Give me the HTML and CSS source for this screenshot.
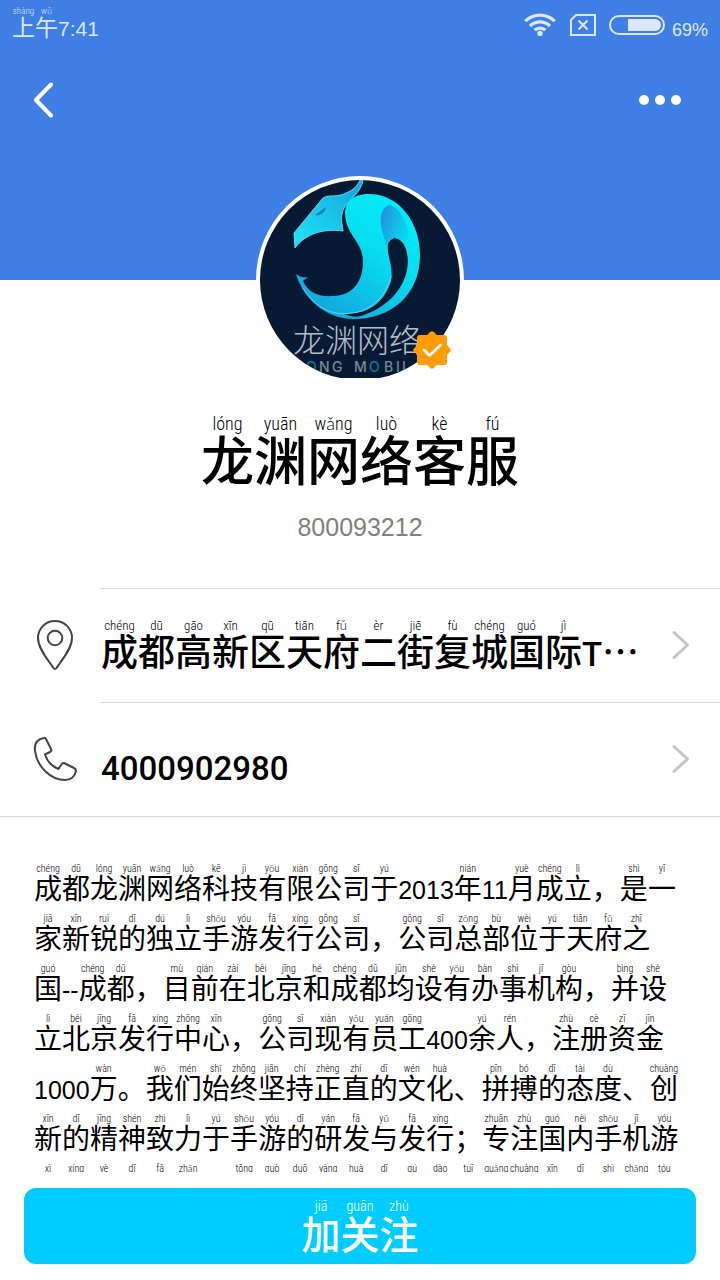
FILE: index.html
```html
<!DOCTYPE html>
<html lang="zh-CN">
<head>
<meta charset="utf-8">
<meta name="viewport" content="width=device-width, initial-scale=1">
<title>龙渊网络客服</title>
<link rel="stylesheet" href="styles.css">
</head>
<body>
<header class="banner">
  <div class="status">
    <span class="clock"><ruby>上<rt>shàng</rt>午<rt>wǔ</rt></ruby><span class="num">7:41</span></span>
    <span class="indicators">
      <svg width="34" height="26" viewBox="0 0 34 26" fill="none" stroke="#dbe7fa" stroke-width="3.2" aria-hidden="true"><path d="M2.2 9.200a21 21 0 0 1 29.6 0M7 14a14.2 14.2 0 0 1 20 0M11.6 18.200a7.8 7.8 0 0 1 10.8 0"/><circle cx="17" cy="21.4" r="2.7" fill="#dbe7fa" stroke="none"/></svg>
      <svg width="26" height="22" viewBox="0 0 26 22" fill="none" stroke="#dbe7fa" stroke-width="2" aria-hidden="true"><path d="M6 1H25V21H1V6Z M8.500 6.500l9 9M17.500 6.500l-9 9"/></svg>
      <svg width="56" height="20" viewBox="0 0 56 20" aria-hidden="true"><rect x="1" y="1" width="54" height="18" rx="9" fill="none" stroke="#dbe7fa" stroke-width="2"/><path d="M19 4H46a6 6 0 0 1 0 12H19Z" fill="#dbe7fa"/></svg>
      <span class="percent">69%</span>
    </span>
  </div>
  <nav class="toolbar">
    <button class="icon-button" type="button" aria-label="返回"><svg width="20" height="36" viewBox="0 0 20 36" fill="none" stroke="#fff" stroke-width="4" stroke-linecap="round" stroke-linejoin="round"><path d="M18 2.500L3 18l15 15.500"/></svg></button>
    <button class="icon-button" type="button" aria-label="更多"><svg width="42" height="10" viewBox="0 0 42 10" fill="#fff"><circle cx="5" cy="5" r="5"/><circle cx="21" cy="5" r="5"/><circle cx="37" cy="5" r="5"/></svg></button>
  </nav>
</header>

<section class="profile">
  <div class="avatar">
    <svg class="portrait" viewBox="0 0 200 200" role="img" aria-label="龙渊网络">
      <defs>
        <clipPath id="frame"><path d="M0 0H200V198H0Z"/></clipPath>
        <linearGradient id="body" x1="1" y1="0" x2="0.300" y2="1"><stop offset="0" stop-color="#00f0f8"/><stop offset="0.450" stop-color="#08dff0"/><stop offset="1" stop-color="#12a7dc"/></linearGradient>
        <linearGradient id="head" x1="1" y1="0" x2="0" y2="1"><stop offset="0" stop-color="#14a4df"/><stop offset="1" stop-color="#20e4f4"/></linearGradient>
        <linearGradient id="fold" x1="0" y1="0" x2="1" y2="0.500"><stop offset="0" stop-color="#258bdc"/><stop offset="1" stop-color="#06def2"/></linearGradient>
      </defs>
      <g clip-path="url(#frame)">
        <rect width="200" height="200" fill="#061a33"/>
        <path d="M34 53L63 18C70 14 77 18 86 13C94 10 98 5 100 0H103C101 12 91 18 84 28C80 36 82 43 83 51C64 48 45 54 35 68Z" fill="url(#head)" stroke="#61d9ec" stroke-width="1"/>
        <path d="M55 35l11-8c-1 5-5 9-11 8Z" fill="#147fb9"/>
        <path d="M85 34C85 20 95 14 109 14C139 14 160 42 160 75C160 116 130 139 94 139C65 139 43 118 36 94C40 97 43 98 48 97L43 101C48 112 57 117 73 116C92 116 103 102 103 82C103 61 86 56 85 34Z" fill="url(#body)"/>
        <path d="M124 57C119 44 119 29 129 25C143 28 152 50 149 77C147 64 142 58 136 58C130 58 127 62 126 66Z" fill="url(#fold)"/>
        <path d="M128 64C130 58 137 55 143 63C155 82 146 122 101 136Q93 138 84 134C113 134 125 119 131 101C134 87 126 74 128 64Z" fill="#061a33"/>
        <path d="M43 108C56 129 74 136 91 133C112 132 127 114 131 96" fill="none" stroke="#58dbed" stroke-width="1"/>
        <text class="logo-name" x="33" y="172">龙渊网络</text>
        <text class="logo-sub" y="192"><tspan x="46" fill="#087a9b">O</tspan><tspan x="59">N</tspan><tspan x="72">G</tspan><tspan x="94">M</tspan><tspan x="109" fill="#087a9b">O</tspan><tspan x="124">B</tspan><tspan x="136">I</tspan><tspan x="142">L</tspan></text>
      </g>
    </svg>
    <svg class="badge" viewBox="0 0 40 40" role="img" aria-label="已认证"><g fill="#ff9c08"><rect x="5" y="5" width="30" height="30" rx="3"/><rect x="6" y="6" width="28" height="28" rx="3" transform="rotate(45 20 20)"/></g><path d="M12 20l5.500 5.500L28.500 15" fill="none" stroke="#fff" stroke-width="2.600" stroke-linecap="round" stroke-linejoin="round"/></svg>
  </div>
  <h1 class="name"><ruby>龙<rt>lóng</rt>渊<rt>yuān</rt>网<rt>wǎng</rt>络<rt>luò</rt>客<rt>kè</rt>服<rt>fú</rt></ruby></h1>
  <p class="account">800093212</p>
</section>

<section class="contacts">
  <a class="contact" href="#address">
    <svg class="contact-icon" viewBox="0 0 44 50" fill="none" stroke="#444" stroke-width="2" stroke-linejoin="round" aria-hidden="true"><path d="M22 1C12 1 5 9 5 18c0 11 11 23 15.500 30q1.500 2 3 0C28 41 39 29 39 18 39 9 32 1 22 1Z"/><circle cx="22" cy="18" r="7.300"/></svg>
    <span class="contact-text"><ruby>成<rt>chéng</rt>都<rt>dū</rt>高<rt>gāo</rt>新<rt>xīn</rt>区<rt>qū</rt>天<rt>tiān</rt>府<rt>fǔ</rt>二<rt>èr</rt>街<rt>jiē</rt>复<rt>fù</rt>城<rt>chéng</rt>国<rt>guó</rt>际<rt>jì</rt></ruby><span class="num">T</span>…</span>
    <svg class="chevron" viewBox="0 0 18 30" fill="none" stroke="#c4c4c4" stroke-width="3" stroke-linecap="round" stroke-linejoin="round" aria-hidden="true"><path d="M2 2.500L15.500 15 2 27.500"/></svg>
  </a>
  <a class="contact" href="tel:4000902980">
    <svg class="contact-icon" viewBox="0 0 44 50" fill="none" stroke="#444" stroke-width="2" stroke-linejoin="round" aria-hidden="true"><path d="M11 4C5 5 1 9 2 17C4 33 18 46 32 46C38 46 42 42 43 37Q43 35 41 34L31 29Q29 29 28 31L25.500 35C18 32 14 27 12 20.500L17 18Q19 17 18 15L13 5Q12 3.500 11 4Z"/></svg>
    <span class="contact-text"><span class="num">4000902980</span></span>
    <svg class="chevron" viewBox="0 0 18 30" fill="none" stroke="#c4c4c4" stroke-width="3" stroke-linecap="round" stroke-linejoin="round" aria-hidden="true"><path d="M2 2.500L15.500 15 2 27.500"/></svg>
  </a>
</section>

<main class="about">
  <p class="intro"><ruby>成<rt>chéng</rt>都<rt>dū</rt>龙<rt>lóng</rt>渊<rt>yuān</rt>网<rt>wǎng</rt>络<rt>luò</rt>科<rt>kē</rt>技<rt>jì</rt>有<rt>yǒu</rt>限<rt>xiàn</rt>公<rt>gōng</rt>司<rt>sī</rt>于<rt>yú</rt></ruby><span class="num">2013</span><ruby>年<rt>nián</rt></ruby><span class="num">11</span><ruby>月<rt>yuè</rt>成<rt>chéng</rt>立<rt>lì</rt></ruby>，<ruby>是<rt>shì</rt>一<rt>yī</rt></ruby><br>
  <ruby>家<rt>jiā</rt>新<rt>xīn</rt>锐<rt>ruì</rt>的<rt>dī</rt>独<rt>dú</rt>立<rt>lì</rt>手<rt>shǒu</rt>游<rt>yóu</rt>发<rt>fā</rt>行<rt>xíng</rt>公<rt>gōng</rt>司<rt>sī</rt></ruby>，<ruby>公<rt>gōng</rt>司<rt>sī</rt>总<rt>zǒng</rt>部<rt>bù</rt>位<rt>wèi</rt>于<rt>yú</rt>天<rt>tiān</rt>府<rt>fǔ</rt>之<rt>zhī</rt></ruby><br>
  <ruby>国<rt>guó</rt></ruby><span class="num">--</span><ruby>成<rt>chéng</rt>都<rt>dū</rt></ruby>，<ruby>目<rt>mù</rt>前<rt>qián</rt>在<rt>zài</rt>北<rt>běi</rt>京<rt>jīng</rt>和<rt>hé</rt>成<rt>chéng</rt>都<rt>dū</rt>均<rt>jūn</rt>设<rt>shè</rt>有<rt>yǒu</rt>办<rt>bàn</rt>事<rt>shì</rt>机<rt>jī</rt>构<rt>gòu</rt></ruby>，<ruby>并<rt>bìng</rt>设<rt>shè</rt></ruby><br>
  <ruby>立<rt>lì</rt>北<rt>běi</rt>京<rt>jīng</rt>发<rt>fā</rt>行<rt>xíng</rt>中<rt>zhōng</rt>心<rt>xīn</rt></ruby>，<ruby>公<rt>gōng</rt>司<rt>sī</rt>现<rt>xiàn</rt>有<rt>yǒu</rt>员<rt>yuán</rt>工<rt>gōng</rt></ruby><span class="num">400</span><ruby>余<rt>yú</rt>人<rt>rén</rt></ruby>，<ruby>注<rt>zhù</rt>册<rt>cè</rt>资<rt>zī</rt>金<rt>jīn</rt></ruby><br>
  <span class="num">1000</span><ruby>万<rt>wàn</rt></ruby>。<ruby>我<rt>wǒ</rt>们<rt>mén</rt>始<rt>shǐ</rt>终<rt>zhōng</rt>坚<rt>jiān</rt>持<rt>chí</rt>正<rt>zhèng</rt>直<rt>zhí</rt>的<rt>dī</rt>文<rt>wén</rt>化<rt>huà</rt></ruby>、<ruby>拼<rt>pīn</rt>搏<rt>bó</rt>的<rt>dī</rt>态<rt>tài</rt>度<rt>dù</rt></ruby>、<ruby>创<rt>chuàng</rt></ruby><br>
  <ruby>新<rt>xīn</rt>的<rt>dī</rt>精<rt>jīng</rt>神<rt>shén</rt>致<rt>zhì</rt>力<rt>lì</rt>于<rt>yú</rt>手<rt>shǒu</rt>游<rt>yóu</rt>的<rt>dī</rt>研<rt>yán</rt>发<rt>fā</rt>与<rt>yǔ</rt>发<rt>fā</rt>行<rt>xíng</rt></ruby>；<ruby>专<rt>zhuān</rt>注<rt>zhù</rt>国<rt>guó</rt>内<rt>nèi</rt>手<rt>shǒu</rt>机<rt>jī</rt>游<rt>yóu</rt></ruby><br>
  <ruby>戏<rt>xì</rt>行<rt>xíng</rt>业<rt>yè</rt>的<rt>dī</rt>发<rt>fā</rt>展<rt>zhǎn</rt></ruby>，<ruby>通<rt>tōng</rt>过<rt>guò</rt>多<rt>duō</rt>样<rt>yàng</rt>化<rt>huà</rt>的<rt>dī</rt>渠<rt>qú</rt>道<rt>dào</rt>推<rt>tuī</rt>广<rt>guǎng</rt>创<rt>chuàng</rt>新<rt>xīn</rt>的<rt>dī</rt>市<rt>shì</rt>场<rt>chǎng</rt>投<rt>tóu</rt></ruby></p>
</main>

<footer class="actions">
  <button class="follow" type="button"><ruby>加<rt>jiā</rt>关<rt>guān</rt>注<rt>zhù</rt></ruby></button>
</footer>
</body>
</html>
```

FILE: styles.css
```css
* { box-sizing: border-box; }

body {
  margin: 0;
  height: 100vh;
  display: flex;
  flex-direction: column;
  background: #fff;
  color: #000;
  font-family: "Liberation Sans", "Noto Sans CJK SC", sans-serif;
}

/* Each reading is a zero-width box centred over the character before it.
   --cell is the character width, --lift the rise above its baseline. */
ruby {
  display: inline;
  font-family: "Noto Sans CJK SC", sans-serif;
  white-space: nowrap;
}

rt {
  display: inline-flex;
  justify-content: center;
  width: 0;
  margin-left: calc(var(--cell) / -2);
  margin-right: calc(var(--cell) / 2);
  vertical-align: var(--lift);
  font-family: "Roboto Condensed", Lato, sans-serif;
  font-weight: 300;
  line-height: 0;
  white-space: nowrap;
}

.num {
  font-family: "Liberation Sans", sans-serif;
  line-height: 1;
}

.banner {
  flex: none;
  height: 280px;
  background: #3f7fe3;
  color: #dbe7fa;
}

.status {
  height: 50px;
  padding: 0 12px;
  display: flex;
  justify-content: space-between;
}

.clock {
  --cell: 23px;
  --lift: 22px;
  font-family: "Noto Sans CJK SC", sans-serif;
  font-size: 23px;
  line-height: 52px;
}

.clock rt { font-size: 9px; }
.clock .num { font-size: 21px; }

.indicators {
  display: flex;
  align-items: center;
  gap: 13px;
}

.percent {
  margin-left: -6px;
  padding-top: 10px;
  font-size: 18px;
}

.toolbar {
  height: 100px;
  padding: 0 27px 0 29px;
  display: flex;
  align-items: center;
  justify-content: space-between;
}

.icon-button {
  padding: 4px;
  border: 0;
  background: none;
  display: flex;
}

.toolbar .icon-button:last-child { padding: 12px; }

.profile {
  flex: none;
  margin-top: -104px;
  display: flex;
  flex-direction: column;
  align-items: center;
}

.avatar {
  position: relative;
  width: 208px;
  height: 208px;
  padding: 4px;
  border-radius: 50%;
  background: #fff;
}

.portrait {
  display: block;
  width: 200px;
  height: 200px;
  border-radius: 50%;
}

.logo-name {
  font: 300 32px "Noto Sans CJK SC", sans-serif;
  fill: #b4bdc8;
}

.logo-sub {
  font: 500 14px Inter, sans-serif;
  fill: #7b8897;
}

.badge {
  position: absolute;
  right: 12px;
  bottom: 14px;
  width: 40px;
  height: 40px;
}

.name {
  --cell: 53px;
  --lift: 51px;
  margin: 24px 0 0;
  font-family: "Noto Sans CJK SC", sans-serif;
  font-size: 53px;
  font-weight: 500;
  line-height: 100px;
}

.name rt { font-size: 18px; }

.account {
  margin: 0 0 42px;
  font-size: 25px;
  line-height: 38px;
  color: #808080;
}

.contacts {
  flex: none;
  border-bottom: 1px solid #d9d9d9;
}

.contact {
  height: 114px;
  padding-left: 33px;
  display: flex;
  align-items: center;
  color: inherit;
  text-decoration: none;
  background: linear-gradient(#d9d9d9, #d9d9d9) 100px 0 / 100% 1px no-repeat;
}

.contact-icon {
  flex: none;
  width: 44px;
  height: 50px;
}

.contact-text {
  --cell: 37px;
  --lift: 36px;
  flex: 1;
  padding: 9px 0 0 24px;
  font-family: "Noto Sans CJK SC", sans-serif;
  font-size: 37px;
  font-weight: 500;
  line-height: 60px;
  white-space: nowrap;
}

.contact-text rt { font-size: 13px; }

.contact-text .num {
  font-family: Roboto, sans-serif;
  font-size: 33px;
}

.chevron {
  flex: none;
  width: 18px;
  height: 30px;
  margin-right: 30px;
}

.about {
  flex: 1;
  min-height: 0;
  overflow: hidden;
  padding: 45px 34px 0;
}

.intro {
  --cell: 28px;
  --lift: 27px;
  margin: 0;
  font-family: "Noto Sans CJK SC", sans-serif;
  font-size: 28px;
  line-height: 50px;
  white-space: nowrap;
}

.intro rt { font-size: 10px; }
.intro .num { font-size: 25px; }

.actions {
  flex: none;
  padding: 16px 24px;
}

.follow {
  --cell: 39px;
  --lift: 38px;
  display: block;
  width: 100%;
  height: 76px;
  padding: 11px 0 0;
  border: 0;
  border-radius: 12px;
  background: #00ccff;
  color: #fff;
  font-family: "Noto Sans CJK SC", sans-serif;
  font-size: 39px;
  font-weight: 500;
  line-height: 62px;
}

.follow rt { font-size: 14px; }
```
